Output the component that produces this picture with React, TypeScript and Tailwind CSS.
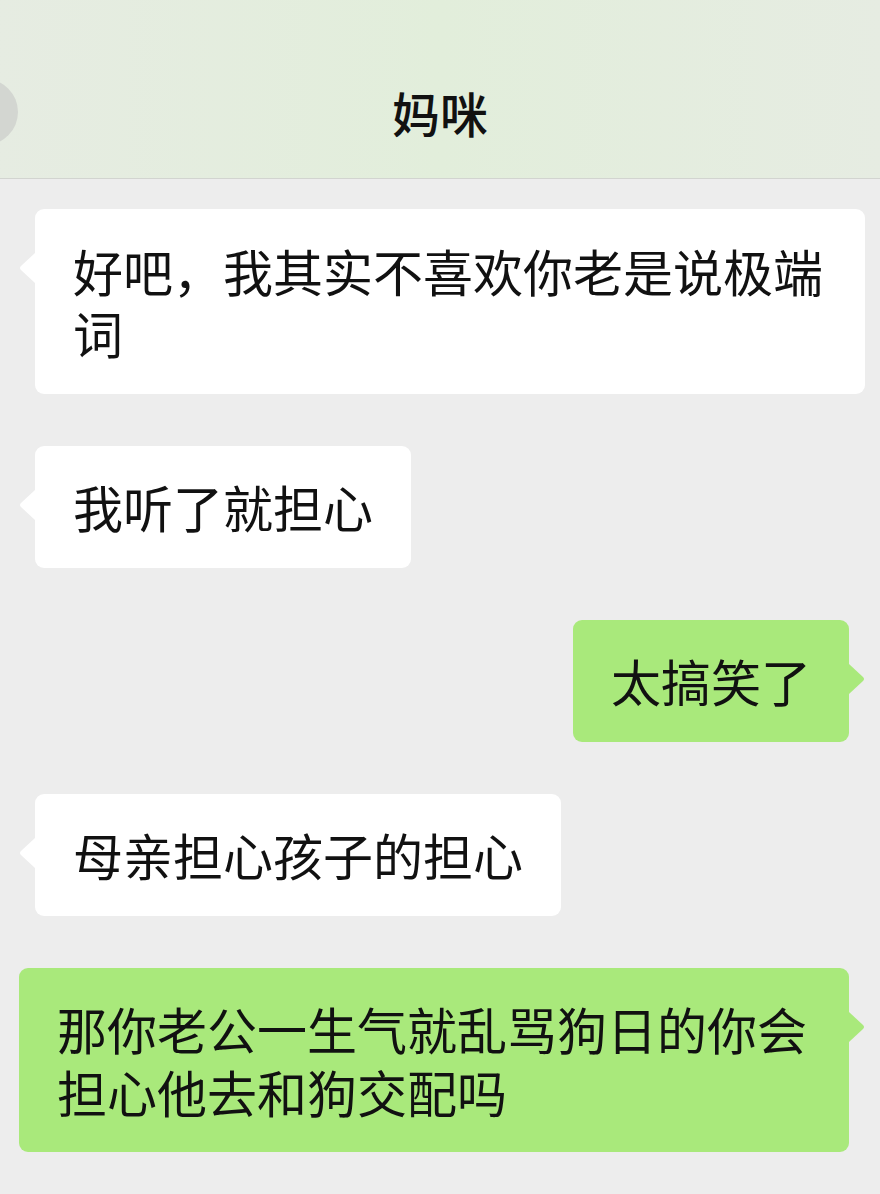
import React from "react";

const font = { fontFamily: '"Noto Sans CJK SC", "Noto Sans", sans-serif' };

function LeftBubble({ text }: { text: string }) {
  return (
    <div className="flex items-start pl-[19px]">
      <svg width="16" height="30" viewBox="0 0 16 30" className="mt-[44px] shrink-0">
        <path d="M16 0 L16 30 L2 17 Q0 15 2 13 Z" fill="#ffffff" />
      </svg>
      <div className="max-w-[830px] rounded-[9px] bg-white px-[38px] pt-[29.5px] pb-[30px] text-[50px] leading-[62.5px] text-[#111]">
        {text}
      </div>
    </div>
  );
}

function RightBubble({ text }: { text: string }) {
  return (
    <div className="flex items-start justify-end pr-[15px]">
      <div className="max-w-[830px] rounded-[9px] bg-[#a9e97b] px-[38px] pt-[29.5px] pb-[30px] text-[50px] leading-[62.5px] text-[#111]">
        {text}
      </div>
      <svg width="16" height="30" viewBox="0 0 16 30" className="mt-[44px] shrink-0">
        <path d="M0 0 L0 30 L14 17 Q16 15 14 13 Z" fill="#a9e97b" />
      </svg>
    </div>
  );
}

export default function App() {
  return (
    <div className="min-h-[1194px] w-[880px] overflow-hidden bg-[#ededed]" style={font}>
      <div className="grid h-[179px] grid-cols-[1fr_auto_1fr] items-center border-b border-[#d2d4d0] bg-gradient-to-r from-[#e6ece2] via-[#e2eedb] to-[#e6ece2] pt-[46px]">
        <div className="flex items-center">
          <div className="-ml-[48px] h-[66px] w-[66px] rounded-full bg-[#d3d6d1]" />
        </div>
        <div className="text-[48px] font-medium leading-[60px] text-[#111]">妈咪</div>
        <div />
      </div>
      <div className="flex flex-col gap-[52px] pt-[30px] pb-[40px]">
        <LeftBubble text="好吧，我其实不喜欢你老是说极端词" />
        <LeftBubble text="我听了就担心" />
        <RightBubble text="太搞笑了" />
        <LeftBubble text="母亲担心孩子的担心" />
        <RightBubble text="那你老公一生气就乱骂狗日的你会担心他去和狗交配吗" />
      </div>
    </div>
  );
}
